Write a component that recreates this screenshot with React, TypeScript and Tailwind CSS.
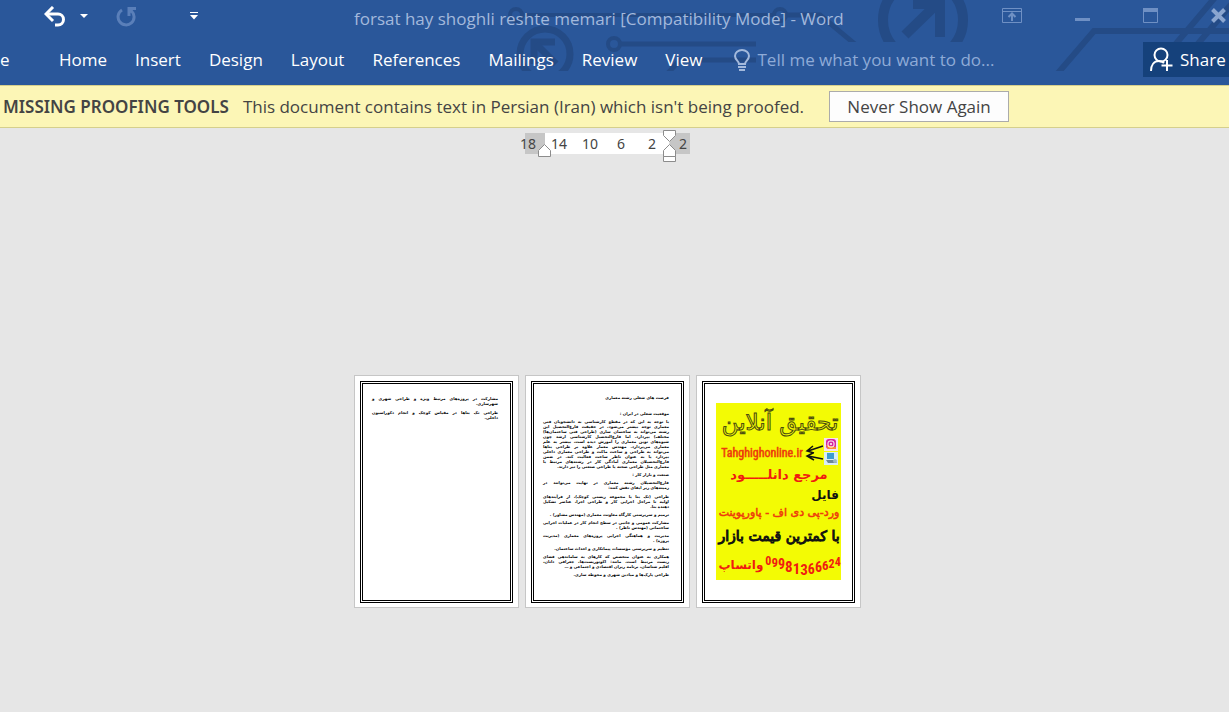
import React from 'react';
import clsx from 'clsx';

const tabs = ['Home', 'Insert', 'Design', 'Layout', 'References', 'Mailings', 'Review', 'View'];

const rulerMarks = ['18', '14', '10', '6', '2', '2'];

// Each paragraph is a list of lines, the last one is not stretched
const firstPage = [
  ['مشارکت در پروژه‌های مرتبط ویژه و طراحی شهری و', 'شهرسازی.'],
  ['طراحی تک بناها در مقیاس کوچک و انجام دکوراسیون', 'داخلی.'],
];

const introParagraphs = [
  ['موقعیت شغلی در ایران :'],
  [
    'با توجه به این که در مقطع کارشناسی به دانشجویان فنی',
    'معماری توجه بیشتر می‌شود، در حقیقت فارغ‌التحصیل این',
    'رشته می‌تواند به ساختمان سازی (طراحی فنی ساختمان‌ها)',
    'مختلف) بپردازد. اما فارغ‌التحصیل کارشناسی ارشد چون',
    'شیوه‌های نوین معماری را آموزش دیده است، بیشتر به علم',
    'معماری می‌پردازد. مهندس معمار علاوه بر طراحی بناها',
    'می‌تواند به طراحی و ساخت ماکت و طراحی معماری داخلی',
    'بپردازد یا به عنوان ناظر ساخت فعالیت کند. در ضمن',
    'فارغ‌التحصیلان معماری آمادگی کار در رشته‌های مرتبط با',
    'معماری مثل طراحی صحنه یا طراحی صنعتی را نیز دارند.',
  ],
  ['صنعت و بازار کار :'],
  ['فارغ‌التحصیلان رشته معماری در نهایت می‌توانند در', 'زمینه‌های زیر ایفای نقش کنند:'],
];

const jobParagraphs = [
  ['طراحی (تک بنا یا مجموعه زیستی کوچک)، از فرآیندهای', 'اولیه تا مراحل اجرایی کار و طراحی اجزا، عناصر تشکیل', 'دهنده بنا.'],
  ['ترمیم و سرپرستی کارگاه معاونت معماری (مهندس مشاور) .'],
  ['مشارکت عمومی و جانبی در سطح انجام کار در عملیات اجرایی', 'ساختمانی (مهندس ناظر) .'],
  ['مدیریت و هماهنگی اجرایی پروژه‌های معماری (مدیریت', 'پروژه) .'],
  ['تنظیم و سرپرستی مؤسسات پیمانکاری و احداث ساختمان.'],
  ['همکاری به عنوان متخصص که کارهای به ساماندهی فضای', 'زیست مرتبط است، مانند: اکوتوریست‌ها، جغرافی دانان،', 'اقلیم شناسان، برنامه ریزان اقتصادی و اجتماعی و …'],
  ['طراحی پارک‌ها و میادین شهری و محوطه سازی.'],
];

const phoneDigits = [
  { digit: '0', size: 12, dy: 0 },
  { digit: '9', size: 13, dy: 2 },
  { digit: '9', size: 14, dy: 2 },
  { digit: '8', size: 15, dy: 3 },
  { digit: '1', size: 15, dy: 2 },
  { digit: '3', size: 15, dy: 1 },
  { digit: '6', size: 14, dy: -1 },
  { digit: '6', size: 14, dy: -2 },
  { digit: '6', size: 13, dy: -2 },
  { digit: '2', size: 12, dy: -2 },
  { digit: '4', size: 12, dy: -2 },
];

const Circuit: React.FC = () => (
  <svg
    className="absolute right-0 top-0 pointer-events-none"
    width="729"
    height="85"
    viewBox="500 0 729 85"
    fill="none"
    stroke="#244b86"
    aria-hidden="true"
  >
    <clipPath id="upper">
      <path d="M500 0h729v42H500z" />
    </clipPath>
    <clipPath id="lower">
      <path d="M500 25h729v46H500z" />
    </clipPath>
    <g clipPath="url(#upper)">
      <circle cx="516" cy="15" r="6" strokeWidth="4" />
      <path d="M522 15h252" strokeWidth="4" />
      <circle cx="780" cy="15" r="6" strokeWidth="4" />
      <path d="M786 15h34l36 30" strokeWidth="5" />
      <circle cx="923" cy="20" r="40" strokeWidth="10" />
      <path d="M905 35l34-33" strokeWidth="10" />
      <path d="M913 4h27v33" strokeWidth="10" />
      <path d="M1174 46L1218 -6M1196 46L1240 -6" strokeWidth="6" />
    </g>
    <g clipPath="url(#lower)">
      <circle cx="545" cy="54" r="25" strokeWidth="7" />
      <path d="M534 64V42h21" strokeWidth="7" />
      <path d="M536 44l20 20" strokeWidth="7" />
      <circle cx="614" cy="44" r="6" strokeWidth="4" />
      <path d="M620 44h136" strokeWidth="5" />
      <path d="M668 73l12-13h76" strokeWidth="5" />
      <path d="M1058 73l36-42h135" strokeWidth="6" />
    </g>
  </svg>
);

const TitleBar: React.FC = () => (
  <div className="relative flex h-[42px] text-[#a3b9dc]">
    <div className="flex w-[354px] shrink-0 items-start pl-11 pt-[6px]">
      <button aria-label="Undo" className="text-white">
        <svg width="22" height="21" viewBox="0 0 22 21" fill="none" stroke="currentColor" strokeWidth="3">
          <path d="M2 8h12a5.5 5.5 0 0 1 0 11h-3" />
          <path d="M9 1L2 8l7 7" />
        </svg>
      </button>
      <button aria-label="Undo list" className="ml-[14px] mt-2 text-white">
        <svg width="8" height="4" viewBox="0 0 8 4" fill="currentColor">
          <path d="M0 0h8L4 4z" />
        </svg>
      </button>
      <button aria-label="Repeat" className="ml-7 text-[#5a7fb9]">
        <svg width="21" height="21" viewBox="0 0 21 21" fill="none" stroke="currentColor" strokeWidth="3">
          <path d="M6 4A8 8 0 1 0 15.500 5" />
          <path d="M13 10V2.500h7M13 3l3 3" />
        </svg>
      </button>
      <button aria-label="Customize toolbar" className="ml-[53px] mt-[6px] text-white">
        <svg width="8" height="8" viewBox="0 0 8 8" fill="currentColor">
          <path d="M0 0h8v1H0zM0 3h8L4 7.500z" />
        </svg>
      </button>
    </div>
    <h1 className="flex-1 whitespace-nowrap pt-[7px] text-[17px] leading-6">
      forsat hay shoghli reshte memari [Compatibility Mode] - Word
    </h1>
    <div className="flex items-start gap-[53px] pr-[3px] pt-2 text-[#6f90c4]">
      <button aria-label="Ribbon display options">
        <svg width="20" height="15" viewBox="0 0 20 15" fill="none" stroke="currentColor">
          <path d="M.5.5h19v14H.5zM.5 3.500h19" />
          <path d="M10 13V6M6.500 9L10 5.500 13.500 9" strokeWidth="2" />
        </svg>
      </button>
      <button aria-label="Minimize">
        <svg width="15" height="15" viewBox="0 0 15 15" fill="currentColor">
          <path d="M0 10h15v3H0z" />
        </svg>
      </button>
      <button aria-label="Maximize">
        <svg width="15" height="15" viewBox="0 0 15 15" fill="none" stroke="currentColor">
          <path d="M.5.5h14v14H.5z" />
          <path d="M0 2h15" strokeWidth="4" />
        </svg>
      </button>
      <button aria-label="Close">
        <svg width="15" height="15" viewBox="0 0 15 15" fill="none" stroke="#8ba6d0" strokeWidth="4">
          <path d="M1.500 1.500l12 12M13.500 1.500l-12 12" />
        </svg>
      </button>
    </div>
  </div>
);

const RibbonTabs: React.FC = () => (
  <nav className="relative flex h-[43px] items-start text-[17px] leading-[35px] text-white">
    <button className="w-[59px] shrink-0 overflow-hidden text-left">e</button>
    <div className="flex gap-7">
      {tabs.map(tab => (
        <button key={tab}>{tab}</button>
      ))}
    </div>
    <label htmlFor="tell-me" className="ml-8 pt-[7px] text-[#a3b9dc]">
      <svg width="16" height="22" viewBox="0 0 16 22" fill="none" stroke="currentColor" strokeWidth="2" aria-label="Tell me">
        <path d="M5 15c0-3-4-4-4-8a7 6 0 0 1 14 0c0 4-4 5-4 8z" />
        <path d="M4 18h8M5 21h6" />
      </svg>
    </label>
    <input
      id="tell-me"
      type="text"
      placeholder="Tell me what you want to do..."
      className="ml-[7px] h-[35px] min-w-0 flex-1 bg-transparent outline-none placeholder:text-[#8fabd7]"
    />
    <button className="flex h-[35px] w-[86px] shrink-0 items-center gap-[7px] bg-[#15417b] pl-[7px]">
      <svg width="23" height="25" viewBox="0 0 23 25" fill="none" stroke="currentColor" strokeWidth="2">
        <circle cx="11" cy="8" r="6.500" />
        <path d="M1 24c0-6 3-10 8-10 3 0 4 1 5 2M17 13v11M11.500 18.500h11" />
      </svg>
      Share
    </button>
  </nav>
);

const MessageBar: React.FC = () => (
  <div className="flex h-[43px] items-center border-y border-[#d5cf8c] bg-[#fcf6b6] pl-[3px] text-[17px] text-[#444]">
    <strong className="whitespace-nowrap font-['Noto_Sans'] font-semibold">MISSING PROOFING TOOLS</strong>
    <span className="ml-[14px] whitespace-nowrap">
      This document contains text in Persian (Iran) which isn't being proofed.
    </span>
    <button className="ml-[25px] h-[31px] w-[180px] shrink-0 whitespace-nowrap border border-[#ababab] bg-[#fdfdfd]">
      Never Show Again
    </button>
  </div>
);

const Ruler: React.FC = () => (
  <div className="relative flex h-[21px] w-[165px] bg-[#c6c6c6] pl-5 pr-5">
    <div className="flex min-w-0 flex-1 justify-center bg-white pr-1 font-['Noto_Sans'] text-sm leading-[21px] text-[#444]">
      {rulerMarks.map((mark, i) => (
        <span key={i} className="relative z-10 w-[31px] shrink-0 text-center">
          {mark}
        </span>
      ))}
    </div>
    <svg className="absolute -top-1 left-3" width="140" height="36" viewBox="0 0 140 36" fill="white" stroke="#8c8c8c">
      <path d="M132 14l6-7h7v15h-7z" fill="#c6c6c6" stroke="none" />
      <path d="M1.500 27.500v-6l6-6 6 6v6z" />
      <path d="M126.500 1.500h12v5l-6 6-6-6z" />
      <path d="M126.500 27.500v-6l6-6 6 6v6zM126.500 27.500h12v5h-12z" />
    </svg>
  </div>
);

const Page: React.FC<{ children: React.ReactNode }> = ({ children }) => (
  <article className="h-[233px] w-[165px] shrink-0 border border-[#c6c6c6] bg-white px-[5px] pb-1 pt-[5px]">
    <div className="h-full border-[3px] border-double border-black">{children}</div>
  </article>
);

const Paragraphs: React.FC<{ items: string[][]; className?: string }> = ({ items, className }) => (
  <div
    dir="rtl"
    className={clsx("flex flex-col whitespace-nowrap font-['DejaVu_Sans',sans-serif] text-[4px] font-bold leading-[5px] text-black", className)}
  >
    {items.map((lines, i) => (
      <p key={i}>
        {lines.map((line, j) => (
          <span key={j} className={clsx('block', j < lines.length - 1 && '[text-align-last:justify]')}>
            {line}
          </span>
        ))}
      </p>
    ))}
  </div>
);

const Poster: React.FC = () => (
  <svg width="125" height="177" viewBox="0 0 125 177" className="bg-[#f3fb04]" fontFamily="DejaVu Sans" fontWeight="700" textAnchor="middle">
    <text x="64" y="27" fontSize="23" fontWeight="400" fill="#f3fb04" stroke="#4a4a10">
      تحقیق آنلاین
    </text>
    <text x="46" y="54" fontSize="12" fontFamily="Roboto Condensed, Roboto" fontWeight="400" fill="#ee3a0c" stroke="#ee3a0c" strokeWidth="0.500">
      Tahghighonline.ir
    </text>
    <g fill="none" stroke="#111" strokeWidth="1.500">
      <path d="M107 43L92 48M97 43l-6 5 7 2M107 56l-15-3M97 50l-6 3 7 4" />
    </g>
    <rect x="108" y="35" width="14" height="13" fill="#f7e3ee" />
    <rect x="110" y="36" width="10" height="10" rx="3" fill="#d6249f" />
    <path d="M110 42l10 2v2h-8z" fill="#fd8d32" />
    <rect x="112" y="38" width="6" height="6" rx="2" fill="none" stroke="#fff" />
    <circle cx="115" cy="41" r="1" fill="#fff" />
    <rect x="108" y="49" width="14" height="13" fill="#d9edf6" />
    <path d="M111 50h7v6h-7z" fill="#3d9bd0" />
    <path d="M110 57h8l3 3h-9z" fill="#6d8795" />
    <circle cx="119" cy="58" r="2" fill="#9db8c4" />
    <text x="63" y="76" fontSize="13" fill="#f01c10">
      مرجع دانلـــــود
    </text>
    <text x="109" y="96" fontSize="12" fill="#111">
      فایل
    </text>
    <text x="63" y="113" fontSize="11" fontWeight="400" fill="#ee3a0c" stroke="#ee3a0c" strokeWidth="0.500">
      ورد-پی دی اف - پاورپوینت
    </text>
    <text x="63" y="138" fontSize="14" fontWeight="400" fill="#111" stroke="#111">
      با کمترین قیمت بازار
    </text>
    <text x="25" y="166" fontSize="12" fill="#f01c10">
      واتساپ
    </text>
    <text x="87" y="162" fontFamily="Roboto Condensed, Roboto" fill="#f01c10">
      {phoneDigits.map(({ digit, size, dy }, i) => (
        <tspan key={i} fontSize={size} dy={dy}>
          {digit}
        </tspan>
      ))}
    </text>
  </svg>
);

const App: React.FC = () => {
  return (
    <div className="flex min-h-screen flex-col overflow-hidden bg-[#e6e6e6] font-['Open_Sans','Noto_Sans',sans-serif]">
      <header className="relative bg-[#2a579a]">
        <Circuit />
        <TitleBar />
        <RibbonTabs />
      </header>
      <MessageBar />
      <main className="flex flex-1 flex-col items-center pr-[14px] pt-[5px]">
        <Ruler />
        <div className="mt-[221px] flex gap-[6px]">
          <Page>
            <Paragraphs items={firstPage} className="gap-1 pl-[9px] pr-3 pt-3" />
          </Page>
          <Page>
            <div className="pl-[9px] pr-3 pt-[11px]">
              <Paragraphs items={[['فرصت های شغلی رشته معماری']]} className="pb-[11px]" />
              <Paragraphs items={introParagraphs} className="gap-[3px] pb-1" />
              <Paragraphs items={jobParagraphs} className="gap-[3px]" />
            </div>
          </Page>
          <Page>
            <div className="flex justify-center pt-[19px]">
              <Poster />
            </div>
          </Page>
        </div>
      </main>
    </div>
  );
};

export default App;
